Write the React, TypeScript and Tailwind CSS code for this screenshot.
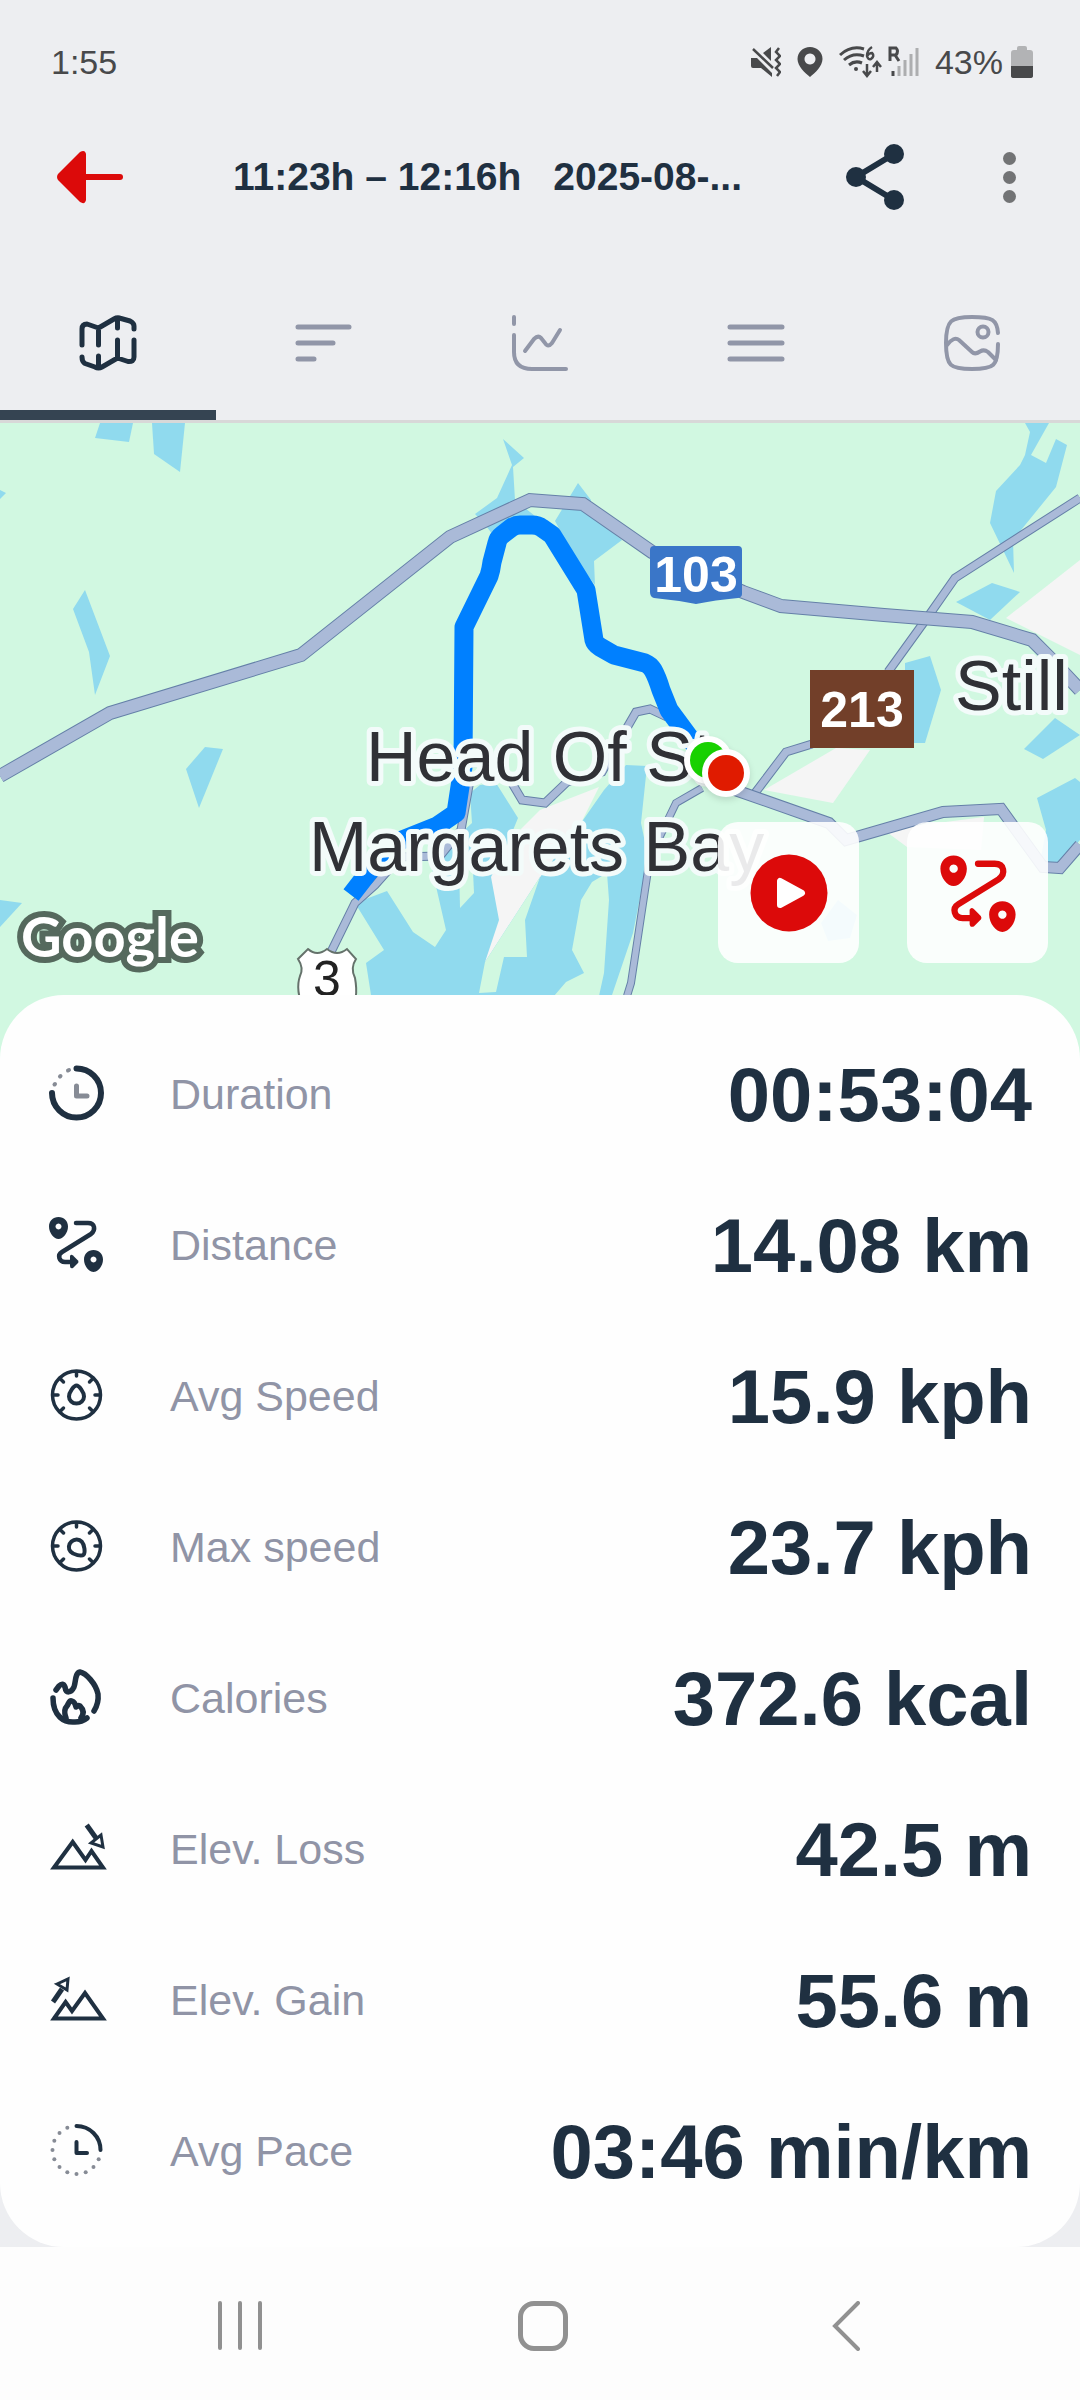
import type { ReactNode } from "react";

function Icon({ children, className = "size-14" }: { children: ReactNode; className?: string }) {
  return (
    <svg
      viewBox="0 0 56 56"
      fill="none"
      stroke="currentColor"
      strokeWidth="5"
      strokeLinecap="round"
      strokeLinejoin="round"
      aria-hidden="true"
      className={`${className} shrink-0 overflow-visible`}
    >
      {children}
    </svg>
  );
}

/* ---------- Tab icons ---------- */

const MapIcon = () => (
  <Icon>
    <path d="M2 30V14Q2 9 7 9L18.500 13L34 4Q37.500 2 41 3.500L50 6Q54 8 54 11V14M18.500 13V30M37.500 3V13" />
    <path d="M2 42Q2 47 5 48.500L15 52Q18.500 54 22 52L37.500 43L48 46.500Q54 47 54 42V25M18.500 41V53M37.500 25V43" />
  </Icon>
);

const SortIcon = () => (
  <Icon>
    <path d="M2 12H53M2 28H37M2 44H18" />
  </Icon>
);

const ChartIcon = () => (
  <Icon>
    <path strokeWidth="4" d="M2 2V9M2 20V37Q2 54 20 54H54M13 36L22 24Q26 20 29 23L33 28Q36 33 40 28L48 15" />
  </Icon>
);

const MenuIcon = () => (
  <Icon>
    <path d="M2 12H54M2 28H54M2 44H54" />
  </Icon>
);

const ImageIcon = () => (
  <Icon>
    <g strokeWidth="4">
      <path d="M54 18C53 5 49 2 28 2S2 5 2 28S6 54 28 54S54 51 54 29" />
      <circle cx="39" cy="17" r="5.500" />
      <path d="M3 30Q10 21 15 25L28 37Q31 40 36 36.500Q40 34 44 37L52 45" />
    </g>
  </Icon>
);

/* ---------- Stat icons ---------- */

const DurationIcon = () => (
  <Icon>
    <path strokeWidth="6" d="M28.500 3.500A24.500 24.500 0 1 1 4 28" />
    <g className="text-[#868b95]">
      <path strokeWidth="5" d="M28.500 21V31H39" />
      <path strokeWidth="4" d="M20 5.500L21 5M12 11.500L12.500 11M6.500 19.500L7 19" />
    </g>
  </Icon>
);

const RouteIcon = ({ className }: { className?: string }) => (
  <Icon className={className}>
    <g fill="currentColor" fillRule="evenodd" stroke="none">
      <path d="M10.500 1C16 1 20 5 20 10.500C20 17 15 23 10.500 23S1 17 1 10.500C1 5 5 1 10.500 1ZM10.500 7.500a3 3 0 1 0 .01 0Z" />
      <path d="M45.500 34C51 34 55 38 55 43.500C55 50 50 56 45.500 56S36 50 36 43.500C36 38 40 34 45.500 34ZM45.500 40.500a3 3 0 1 0 .01 0Z" />
      <path d="M22 40Q23 38 25 39.500L30 44.500Q31 46 30 47L25 52Q22 53 22 50Z" />
    </g>
    <path strokeWidth="4.500" d="M28 7H40C47 7 48 14 43 18L14 36C9 39 11 46 17 46H24" />
  </Icon>
);

const SpeedIcon = ({ max = false }: { max?: boolean }) => (
  <Icon>
    <circle cx="28.500" cy="28" r="24" strokeWidth="3.500" />
    <path strokeWidth="3.500" d="M28.500 5V9M5 28H10M47 28H52M12 11.500L15.500 15M45 11.500L41.500 15M12 44.500L15.500 41M45 44.500L41.500 41" />
    <path
      strokeWidth="4"
      transform={max ? "rotate(138 28.5 29)" : undefined}
      d="M28.500 18.500C26 18.500 21 25 21 29.500a7.500 7 0 0 0 15 0C36 25 31 18.500 28.500 18.500Z"
    />
  </Icon>
);

const FlameIcon = () => (
  <Icon>
    <g strokeWidth="5.500">
      <path d="M8 21L11 17Q15 13 17 18C18 25 23 24 26 18C28 12 27 4 32 3C38 4 48 15 50 25Q51 34 46 42" />
      <path d="M5 29C5 47 16 54 27 53Q34 53 39 49" />
      <path d="M18 49Q15 41 19 37C21 34 21 31 24 32Q27 33 28 38Q30 36 32 37C36 41 36 45 33 49" />
    </g>
  </Icon>
);

const ElevLossIcon = () => (
  <Icon>
    <g strokeLinecap="butt" strokeLinejoin="miter">
      <path strokeWidth="4" d="M6 47.500L24.700 22L37.500 40L43.500 31L55 47.500Z" />
      <path d="M38.700 5L48 18" />
      <path strokeWidth="3" d="M43 23L53 15L55 27Z" />
    </g>
  </Icon>
);

const ElevGainIcon = () => (
  <Icon>
    <g strokeLinecap="butt" strokeLinejoin="miter">
      <path strokeWidth="4" d="M6 47.500L17.600 31L24 40L37 22L55 47.500Z" />
      <path d="M5 31L14 18" />
      <path strokeWidth="3" d="M9 13L20 8L19 19Z" />
    </g>
  </Icon>
);

// Remaining three quarters of the dial are dots, one every 22.5 degrees
const paceDots = Array.from({ length: 11 }, (_, i) => ((i + 5) * Math.PI) / 8);

const PaceIcon = () => (
  <Icon>
    <path strokeWidth="4" d="M28.500 4A24 24 0 0 1 52.500 28M28.500 20V31H39" />
    <g fill="#868b95" stroke="none">
      {paceDots.map((a) => (
        <circle key={a} cx={28.5 + 24 * Math.sin(a)} cy={28 - 24 * Math.cos(a)} r="2" />
      ))}
    </g>
  </Icon>
);

/* ---------- Data ---------- */

const tabs = [
  { name: "Map", icon: <MapIcon /> },
  { name: "Laps", icon: <SortIcon /> },
  { name: "Charts", icon: <ChartIcon /> },
  { name: "List", icon: <MenuIcon /> },
  { name: "Photos", icon: <ImageIcon /> },
];

const stats = [
  { label: "Duration", value: "00:53:04", icon: <DurationIcon /> },
  { label: "Distance", value: "14.08 km", icon: <RouteIcon /> },
  { label: "Avg Speed", value: "15.9 kph", icon: <SpeedIcon /> },
  { label: "Max speed", value: "23.7 kph", icon: <SpeedIcon max /> },
  { label: "Calories", value: "372.6 kcal", icon: <FlameIcon /> },
  { label: "Elev. Loss", value: "42.5 m", icon: <ElevLossIcon /> },
  { label: "Elev. Gain", value: "55.6 m", icon: <ElevGainIcon /> },
  { label: "Avg Pace", value: "03:46 min/km", icon: <PaceIcon /> },
];

const water = [
  "100,423 133,423 129,442 95,438",
  "152,423 185,423 180,472 154,454",
  "0,490 6,493 0,499",
  "85,590 110,656 95,695 89,652 73,609",
  "503,439 524,458 513,467 515,500 540,520 500,545 487,527 475,514 497,498 512,465",
  "578,483 591,500 590,515 622,540 594,561 595,585 576,560 555,521",
  "1025,423 1049,423 1031,455 1046,463 1056,439 1067,445 1056,487 1013,540 1014,573 1003,550 990,523 996,491 1020,465 1025,455 1030,432",
  "956,602 992,583 1020,592 990,620",
  "905,663 930,656 941,690 925,743 905,743",
  "1024,749 1055,718 1080,735 1043,759",
  "1037,798 1075,778 1080,782 1080,840 1055,868 1040,862 1046,830",
  "821,923 838,900 857,915 850,938 828,941",
  "0,900 22,903 0,927",
  "205,747 223,749 199,808 186,769",
  "371,995 366,963 384,950 355,903 387,891 413,932 435,947 446,930 430,860 461,833 472,823 470,793 480,785 496,783 518,818 505,850 540,877 581,823 604,790 626,765 647,766 641,823 648,857 633,933 612,995",
];

const urban = [
  "1006,618 1080,560 1080,655",
  "764,790 836,748 870,750 833,803",
  "884,830 984,817 981,850 907,847",
  "599,787 540,810 510,840 491,877 499,920 485,962 540,877 581,823",
];

const land = [
  "540,877 525,920 527,957 504,957 496,992 479,993 485,962",
  "472,850 474,893 460,908 459,860",
  "607,873 592,882 581,900 572,950 584,973 566,982 554,996 599,996 604,973 609,900",
];

const roads = [
  { width: 7, points: "465,763 489,762 506,773 522,800 545,803 567,782 592,775 602,772 621,738 636,712 650,709 667,717" },
  { width: 7, points: "470,780 461,830 440,856 400,857 375,885 355,903 331,952" },
  { width: 6, points: "702,788 676,803 650,857 631,983 627,996" },
  { width: 7, points: "755,793 786,752 812,744" },
  { width: 7, points: "888,672 927,618 955,578 1080,498" },
  { width: 10, points: "735,790 829,823 846,840 943,812 1001,809 1043,867 1060,868 1080,845" },
  { width: 12, points: "0,776 110,713 301,655 450,537 530,500 583,504 652,552 743,592 781,606 884,615 972,622 1032,640 1050,658 1080,690" },
];

/* ---------- Sections ---------- */

function StatusBar() {
  return (
    <div className="flex h-[124px] items-center justify-between pr-[47px] pl-[51px] text-[34px] text-[#48494b]">
      <span>1:55</span>
      <div className="flex items-center gap-4">
        <svg viewBox="0 0 30 32" className="h-8 w-[30px]" aria-hidden="true">
          <path fill="currentColor" d="M0 12h6L21 27V31L10 22H2Q0 22 0 20ZM12 7L20 1V15Z" />
          <path d="M2 3L22 22M28 2L25 6L29 10L25 14L29 18L25 22L29 26L26 30" fill="none" stroke="currentColor" strokeWidth="2.500" />
        </svg>
        <svg viewBox="0 0 26 32" className="h-8 w-[26px]" aria-hidden="true">
          <path fill="currentColor" fillRule="evenodd" d="M13 1C20 1 25.500 6 25.500 13C25.500 20 18 27 13 31C8 27 .5 20 .5 13C.5 6 6 1 13 1ZM13 7.500a5.500 5.500 0 1 0 .01 0Z" />
        </svg>
        <div className="flex items-center gap-1.5">
          <svg viewBox="0 0 43 34" className="h-[34px] w-[43px]" fill="none" stroke="currentColor" strokeWidth="3" aria-hidden="true">
            <path d="M1 10Q12 0 25 4M5 15Q14 7 25 11M10 20Q16 15 23 18" />
            <circle cx="17" cy="24" r="2" fill="currentColor" stroke="none" />
            <path d="M33 2Q28 5 28 11Q29 15 32 14Q36 11 33 8Q30 8 28 11" strokeWidth="2.500" />
            <path d="M28 19V30M24 26L28 31L32 26M38 27V18M34 22L38 17L42 22" strokeWidth="2.500" />
          </svg>
          <svg viewBox="0 0 31 34" className="h-[34px] w-[31px]" aria-hidden="true">
            <path d="M2 16V3H8Q11 6 8 10H2M7 10L11 16" fill="none" stroke="currentColor" strokeWidth="3" />
            <path d="M5 26V31" stroke="currentColor" strokeWidth="3" />
            <path d="M11 21V31M17 15V31M23 9V31M29 3V31" stroke="#adaeb0" strokeWidth="3" />
          </svg>
        </div>
        <div className="flex items-center gap-2">
          <span>43%</span>
          <svg viewBox="0 0 22 34" className="h-[34px] w-[22px]" aria-hidden="true">
            <path fill="#b2b3b5" d="M6 3Q6 1 8 1H14Q16 1 16 3V5H19Q22 5 22 8V22H0V8Q0 5 3 5H6Z" />
            <path fill="currentColor" d="M0 21H22V31Q22 33 19 33H3Q0 33 0 31Z" />
          </svg>
        </div>
      </div>
    </div>
  );
}

function Header() {
  return (
    <header className="flex h-[106px] items-center pr-[57px] pl-[57px]">
      <button aria-label="Back" className="text-[#dc0a0a]">
        <svg viewBox="0 0 66 54" className="h-[54px] w-[66px]" aria-hidden="true">
          <path fill="currentColor" d="M1 24L23 2Q28 -1 29 4V50Q28 55 23 52L1 30Q-1 27 1 24Z" />
          <path d="M26 27H63" stroke="currentColor" strokeWidth="6" strokeLinecap="round" />
        </svg>
      </button>
      <h1 className="ml-[110px] flex flex-1 gap-8 text-[39px] font-bold whitespace-nowrap text-[#1f3041]">
        <span>11:23h – 12:16h</span>
        <span>2025-08-...</span>
      </h1>
      <button aria-label="Share" className="mr-[91px] text-[#1f3041]">
        <svg viewBox="0 0 58 66" className="h-[66px] w-[58px]" fill="currentColor" aria-hidden="true">
          <path d="M48 10L10 33L48 56" fill="none" stroke="currentColor" strokeWidth="6" />
          <circle cx="48" cy="10" r="10" />
          <circle cx="10" cy="33" r="10" />
          <circle cx="48" cy="56" r="10" />
        </svg>
      </button>
      <button aria-label="More options" className="flex w-[28px] flex-col items-center gap-[6px]">
        <span className="size-[13px] rounded-full bg-[#727375]" />
        <span className="size-[13px] rounded-full bg-[#727375]" />
        <span className="size-[13px] rounded-full bg-[#727375]" />
      </button>
    </header>
  );
}

function Tabs() {
  return (
    <nav role="tablist" className="grid h-[193px] grid-cols-5 border-b-[3px] border-[#d8d8d8]">
      {tabs.map((tab, i) => (
        <button
          key={tab.name}
          role="tab"
          aria-label={tab.name}
          aria-selected={i === 0}
          className={
            i === 0
              ? "flex items-center justify-center border-b-[10px] border-[#354452] pt-[46px] text-[#1f3041]"
              : "flex items-center justify-center border-b-[10px] border-transparent pt-[46px] text-[#9196a8]"
          }
        >
          {tab.icon}
        </button>
      ))}
    </nav>
  );
}

function RouteMap() {
  return (
    <section aria-label="Route map" className="relative h-[640px] overflow-hidden bg-[#d1f8e1]">
      <svg viewBox="0 423 1080 640" preserveAspectRatio="xMidYMin slice" className="size-full">
        <g fill="#90daee">
          {water.map((points) => (
            <polygon key={points} points={points} />
          ))}
        </g>
        <g fill="#f5f5f5">
          {urban.map((points) => (
            <polygon key={points} points={points} />
          ))}
        </g>
        <g fill="#d1f8e1">
          {land.map((points) => (
            <polygon key={points} points={points} />
          ))}
        </g>
        <g fill="none">
          {roads.map((road) => (
            <g key={road.points}>
              <polyline points={road.points} stroke="#6580a8" strokeWidth={road.width + 2} />
              <polyline points={road.points} stroke="#aabad8" strokeWidth={road.width} />
            </g>
          ))}
        </g>
        <path
          d="M351 895L375 864L387 846L437 826L456 813L463 767L464 627L489 576Q491 570 492 562L497 543Q498 538 502 535L511 528Q515 525 520 525H532Q538 525 542 528L552 535L586 590L594 640Q595 644 600 647L614 655L645 663Q650 665 653 670Q657 677 661 690L669 710L700 752"
          fill="none"
          stroke="#0080ff"
          strokeWidth="19"
          strokeLinejoin="round"
        />

        {/* Road shields */}
        <path fill="#3a76c8" d="M654 546H738Q742 546 742 550V594Q742 597 738 598Q715 600 696 604Q675 600 654 598Q650 597 650 592V550Q650 546 654 546Z" />
        <rect x="810" y="670" width="104" height="78" fill="#723f29" />
        <path
          fill="#fff"
          stroke="#65726b"
          strokeWidth="2"
          d="M308 949Q317 957 327 949Q337 957 347 949L356 959Q350 968 355 978Q359 1000 350 1010H304Q295 990 300 976Q304 968 298 959Z"
        />
        <g fill="#fff" fontSize="50" fontWeight="700" textAnchor="middle">
          <text x="696" y="592">103</text>
          <text x="862" y="727">213</text>
        </g>
        <text x="327" y="996" fill="#222" fontSize="50" textAnchor="middle">3</text>

        {/* Place names */}
        <g fill="#303136" fontSize="70" stroke="#f3fbfa" strokeWidth="10" strokeLinejoin="round" paintOrder="stroke">
          <text x="366" y="781">Head Of St.</text>
          <text x="309" y="871">Margarets Bay</text>
          <text x="955" y="710">Still</text>
        </g>
        <text
          x="21"
          y="957"
          fill="#fff"
          fontSize="56"
          fontWeight="700"
          fontFamily="Lato, sans-serif"
          stroke="#55695d"
          strokeWidth="12"
          paintOrder="stroke"
        >
          Google
        </text>

        {/* Start and finish */}
        <g className="drop-shadow-md">
          <circle cx="708" cy="760" r="24" fill="#fff" />
          <circle cx="708" cy="760" r="18" fill="#18d100" />
        </g>
        <g className="drop-shadow-md">
          <circle cx="726" cy="773" r="24" fill="#fff" />
          <circle cx="726" cy="773" r="18" fill="#e01b00" />
        </g>
      </svg>

      <div className="absolute right-8 bottom-[100px] flex gap-12 text-[#dc0a0a]">
        <button aria-label="Play route" className="flex size-[141px] items-center justify-center rounded-[20px] bg-white/90">
          <svg viewBox="0 0 78 78" className="size-[78px]" aria-hidden="true">
            <circle cx="39" cy="39" r="38.500" fill="currentColor" />
            <path d="M30 27V51L52 39Z" fill="#fff" stroke="#fff" strokeWidth="6" strokeLinejoin="round" />
          </svg>
        </button>
        <button aria-label="Show distance" className="flex size-[141px] items-center justify-center rounded-[20px] bg-white/90">
          <RouteIcon className="size-[78px]" />
        </button>
      </div>
    </section>
  );
}

function Stats() {
  return (
    <dl className="relative -mt-[68px] rounded-[64px] bg-[#fefefe] px-12 py-[22px]">
      {stats.map((stat) => (
        <div key={stat.label} className="flex h-[151px] items-center text-[#1f3041]">
          {stat.icon}
          <dt className="ml-[66px] flex-1 pt-1 text-[43px] text-[#9094a6]">{stat.label}</dt>
          <dd className="pt-1 text-[76px] font-bold whitespace-nowrap">{stat.value}</dd>
        </div>
      ))}
    </dl>
  );
}

function SystemNav() {
  return (
    <nav className="grid h-[153px] grid-cols-3 bg-[#fdfdfd] pt-1 pr-[82px] pl-[88px] text-[#919191]">
      <button aria-label="Recent apps" className="flex items-center justify-center gap-4">
        <span className="h-[49px] w-1 rounded-full bg-current" />
        <span className="h-[49px] w-1 rounded-full bg-current" />
        <span className="h-[49px] w-1 rounded-full bg-current" />
      </button>
      <button aria-label="Home" className="flex items-center justify-center">
        <span className="size-[50px] rounded-2xl border-[5px] border-current" />
      </button>
      <button aria-label="Back" className="flex items-center justify-center">
        <svg viewBox="0 0 28 50" className="h-[50px] w-7" aria-hidden="true">
          <path d="M26 2L3 25L26 48" fill="none" stroke="currentColor" strokeWidth="4" strokeLinecap="round" />
        </svg>
      </button>
    </nav>
  );
}

export default function App() {
  return (
    <div className="flex min-h-screen flex-col bg-[#edeef1] font-['Liberation_Sans',Arial,sans-serif]">
      <StatusBar />
      <Header />
      <Tabs />
      <main className="flex-1 bg-[#edeef1]">
        <RouteMap />
        <Stats />
      </main>
      <SystemNav />
    </div>
  );
}
